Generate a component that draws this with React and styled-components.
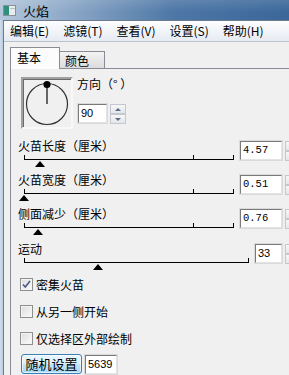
import React from "react";
import styled, { createGlobalStyle } from "styled-components";

const GlobalStyle = createGlobalStyle`
  html, body {
    margin: 0;
    padding: 0;
    background: #f0f0f0;
  }
  body {
    font-family: "Noto Sans CJK SC", "Liberation Sans", sans-serif;
    font-size: 12px;
    color: #000;
  }
  * {
    box-sizing: border-box;
  }
`;

const Screen = styled.div`
  width: 289px;
  height: 375px;
  overflow: hidden;
  display: flex;
  flex-direction: column;
  background: #f0f0f0;
`;

const TitleBar = styled.div`
  flex: none;
  height: 20px;
  display: flex;
  align-items: center;
  gap: 7px;
  padding-left: 3px;
  background: linear-gradient(to bottom, rgba(255, 255, 255, 0.12), rgba(255, 255, 255, 0) 60%),
    linear-gradient(to right, #b3c6db 0%, #8aa6c6 25%, #4d77a6 60%, #3a6799 100%);
  font-size: 13px;
  white-space: nowrap;
`;

const Body = styled.div`
  flex: 1;
  display: flex;
  min-height: 0;
`;

const LeftFrame = styled.div`
  flex: none;
  width: 3px;
  background: linear-gradient(to right, #d2dfec, #b6c9de);
`;

const Window = styled.div`
  flex: none;
  width: 298px;
  display: flex;
  flex-direction: column;
  border-left: 1px solid #6d7b8c;
  border-top: 1px solid #6d7b8c;
`;

const MenuBar = styled.div`
  flex: none;
  height: 21px;
  display: flex;
  align-items: center;
  gap: 14px;
  padding-left: 6px;
  background: linear-gradient(to bottom, #fdfdfe, #e6ebf2);
  border-bottom: 1px solid #bcc3cc;
  white-space: nowrap;
`;

const MenuItem = styled.span`
  line-height: 14px;
`;

const TabStrip = styled.div`
  flex: none;
  height: 26px;
  display: flex;
  align-items: flex-end;
  padding-left: 6px;
`;

const Tab = styled.div`
  position: relative;
  border: 1px solid #898c95;
  border-bottom: none;
  line-height: 14px;
  white-space: nowrap;
  ${(p) =>
    p.$active
      ? `
    z-index: 1;
    width: 50px;
    height: 22px;
    margin-bottom: -1px;
    padding: 3px 0 0 6px;
    background: #fcfcfc;
  `
      : `
    width: 46px;
    height: 17px;
    margin-left: -1px;
    padding: 2px 0 0 5px;
    background: linear-gradient(to bottom, #f3f3f3, #dcdcdc);
  `}
`;

const Panel = styled.div`
  flex: 1;
  margin-left: 6px;
  border-top: 1px solid #898c95;
  border-left: 1px solid #898c95;
  padding: 8px 0 0 7px;
  display: flex;
  flex-direction: column;
`;

const DirectionRow = styled.div`
  display: flex;
  margin-left: 3px;
`;

const DialBox = styled.div`
  flex: none;
  width: 52px;
  height: 52px;
  border: 2px solid;
  border-color: #a0a0a0 #f8f8f8 #f8f8f8 #a0a0a0;
  box-shadow: inset 1px 1px 0 #6b6b6b;
  svg {
    display: block;
  }
`;

const DirectionSide = styled.div`
  margin-left: 4px;
  display: flex;
  flex-direction: column;
`;

const Caption = styled.div`
  line-height: 14px;
  height: 14px;
  white-space: nowrap;
`;

const SpinRow = styled.div`
  display: flex;
  align-items: flex-start;
  gap: 3px;
  margin-top: 13px;
  margin-left: 1px;
`;

const NumberBox = styled.div`
  flex: none;
  width: ${(p) => p.$width}px;
  height: 19px;
  background: #fff;
  border: 1px solid;
  border-color: #7a7a7a #e3e3e3 #e3e3e3 #7a7a7a;
  box-shadow: 0 0 0 1px #dadada;
  padding-left: 2px;
  display: flex;
  align-items: center;
  font-family: ${(p) =>
    p.$mono ? '"Liberation Mono", monospace' : '"Liberation Sans", sans-serif'};
  font-size: ${(p) => (p.$mono ? "10.5px" : "11px")};
  line-height: 1;
`;

const Spinner = styled.div`
  flex: none;
  width: 16px;
  height: 20px;
  display: flex;
  flex-direction: column;
`;

const SpinHalf = styled.div`
  flex: 1;
  border: 1px solid #c3c7cf;
  background: linear-gradient(to bottom, #f7f7f7, #e4e6ea);
  display: flex;
  align-items: center;
  justify-content: center;
  &::after {
    content: "";
    width: 0;
    height: 0;
    border-left: 3px solid transparent;
    border-right: 3px solid transparent;
    ${(p) =>
      p.$down
        ? "border-top: 3px solid #5b6b88;"
        : "border-bottom: 3px solid #5b6b88;"}
  }
`;

const SliderList = styled.div`
  display: flex;
  flex-direction: column;
  gap: 6px;
  margin-top: 10px;
`;

const SliderGroup = styled.div`
  display: flex;
  align-items: flex-start;
  height: 28px;
  margin-top: ${(p) => p.$extra || 0}px;
`;

const SliderCol = styled.div`
  flex: 1;
  margin-right: 6px;
`;

const Track = styled.div`
  position: relative;
  height: 7px;
  margin: 0 0 7px 6px;
  border-bottom: 1px solid #000;
`;

const Tick = styled.span`
  position: absolute;
  top: 2px;
  width: 1px;
  height: 5px;
  background: #000;
`;

const Thumb = styled.span`
  position: absolute;
  top: 8px;
  width: 0;
  height: 0;
  transform: translateX(-5px);
  border-left: 5px solid transparent;
  border-right: 5px solid transparent;
  border-bottom: 6px solid #000;
`;

const ValueWrap = styled.div`
  display: flex;
  align-items: flex-start;
  gap: 3px;
  margin-top: 2px;
`;

const CheckList = styled.div`
  display: flex;
  flex-direction: column;
  gap: 14px;
  margin-top: 8px;
  margin-left: 2px;
`;

const CheckRow = styled.label`
  display: flex;
  align-items: center;
  gap: 2px;
  height: 13px;
  line-height: 14px;
  white-space: nowrap;
`;

const CheckBox = styled.span`
  flex: none;
  width: 13px;
  height: 13px;
  border: 1px solid #8e8f8f;
  background: linear-gradient(135deg, #dcdcdc, #fbfbfb);
  box-shadow: inset 0 0 0 1px #f4f4f4;
  margin-right: 1px;
  svg {
    display: block;
  }
`;

const ButtonRow = styled.div`
  display: flex;
  align-items: center;
  gap: 3px;
  margin-top: 9px;
  margin-left: 3px;
`;

const PushButton = styled.button`
  width: 61px;
  height: 20px;
  padding: 0;
  border: 1px solid #3c7fb1;
  border-radius: 3px;
  background: linear-gradient(to bottom, #eaf6fd 0%, #d9f0fc 50%, #bee6fd 50%, #a7d9f5 100%);
  box-shadow: inset 0 0 0 1px rgba(255, 255, 255, 0.6);
  font-family: "Noto Sans CJK SC", sans-serif;
  font-size: 13px;
  line-height: 16px;
  color: #000;
`;

const sliders = [
  { label: "火苗长度（厘米）", value: "4.57", pos: 0.077, ticks: [0, 0.804, 1] },
  { label: "火苗宽度（厘米）", value: "0.51", pos: 0, ticks: [0, 0.804, 1] },
  { label: "侧面减少（厘米）", value: "0.76", pos: 0.067, ticks: [0, 0.804, 1] },
  { label: "运动", value: "33", pos: 0.33, ticks: [0, 1], narrow: true },
];

const checks = [
  { label: "密集火苗", checked: true },
  { label: "从另一侧开始" },
  { label: "仅选择区外部绘制" },
];

function Spin() {
  return (
    <Spinner>
      <SpinHalf />
      <SpinHalf $down />
    </Spinner>
  );
}

function Slider({ item }) {
  return (
    <SliderGroup $extra={item.narrow ? 1 : 0}>
      <SliderCol>
        <Caption>{item.label}</Caption>
        <Track>
          {item.ticks.map((t) => (
            <Tick key={t} style={{ left: t === 1 ? "calc(100% - 1px)" : `${t * 100}%` }} />
          ))}
          <Thumb style={{ left: `${item.pos * 100}%` }} />
        </Track>
      </SliderCol>
      <ValueWrap>
        <NumberBox $width={item.narrow ? 27 : 42} $mono={!item.narrow}>
          {item.value}
        </NumberBox>
        <Spin />
      </ValueWrap>
    </SliderGroup>
  );
}

export default function App() {
  return (
    <>
      <GlobalStyle />
      <Screen>
        <TitleBar>
          <svg width="13" height="11" viewBox="0 0 13 11">
            <rect x="0.5" y="0.5" width="12" height="10" fill="#e8ecef" stroke="#8a9098" />
            <rect x="1" y="1" width="5" height="9" fill="#2f8f7a" />
            <rect x="7" y="3" width="5" height="1" fill="#b8c0c8" />
          </svg>
          <span>火焰</span>
        </TitleBar>
        <Body>
          <LeftFrame />
          <Window>
            <MenuBar>
              <MenuItem>编辑(E)</MenuItem>
              <MenuItem>滤镜(T)</MenuItem>
              <MenuItem>查看(V)</MenuItem>
              <MenuItem>设置(S)</MenuItem>
              <MenuItem>帮助(H)</MenuItem>
            </MenuBar>
            <TabStrip>
              <Tab $active>基本</Tab>
              <Tab>颜色</Tab>
            </TabStrip>
            <Panel>
              <DirectionRow>
                <DialBox>
                  <svg width="48" height="48" viewBox="0 0 48 48">
                    <circle cx="24" cy="25" r="20.5" fill="none" stroke="#333" strokeWidth="1.2" />
                    <line x1="24" y1="6" x2="24" y2="25" stroke="#666" strokeWidth="2" />
                    <circle cx="24" cy="5.5" r="3.6" fill="#000" />
                  </svg>
                </DialBox>
                <DirectionSide>
                  <Caption>方向（° ）</Caption>
                  <SpinRow>
                    <NumberBox $width={29}>90</NumberBox>
                    <Spin />
                  </SpinRow>
                </DirectionSide>
              </DirectionRow>

              <SliderList>
                {sliders.map((s) => (
                  <Slider key={s.label} item={s} />
                ))}
              </SliderList>

              <CheckList>
                {checks.map((c) => (
                  <CheckRow key={c.label}>
                    <CheckBox>
                      {c.checked && (
                        <svg width="11" height="11" viewBox="0 0 11 11">
                          <path d="M2 5.5 L4.3 8 L9 2" fill="none" stroke="#4a5a86" strokeWidth="1.6" />
                        </svg>
                      )}
                    </CheckBox>
                    {c.label}
                  </CheckRow>
                ))}
              </CheckList>

              <ButtonRow>
                <PushButton>随机设置</PushButton>
                <NumberBox $width={32}>5639</NumberBox>
              </ButtonRow>
            </Panel>
          </Window>
        </Body>
      </Screen>
    </>
  );
}
